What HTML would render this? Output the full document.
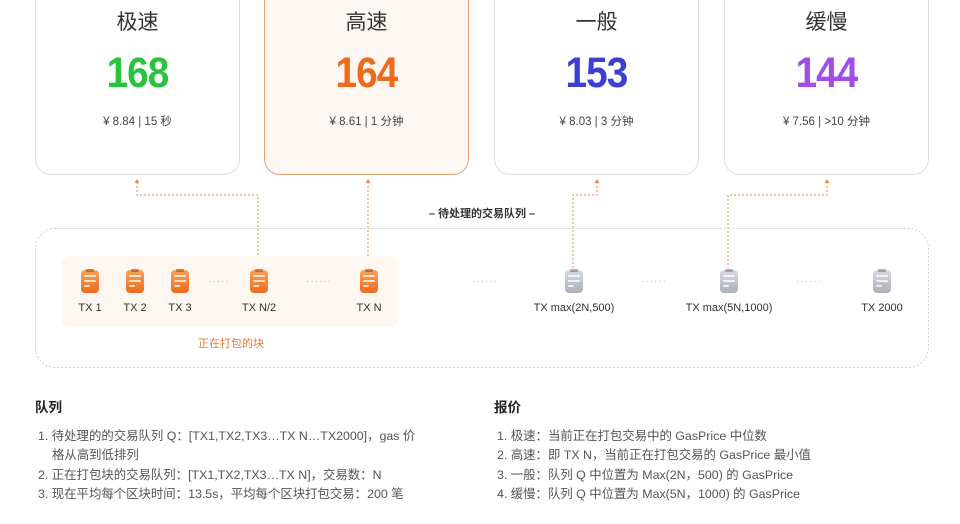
<!DOCTYPE html><html><head><meta charset="utf-8"><style>
*{margin:0;padding:0;box-sizing:border-box}
body{width:960px;height:524px;background:#fff;position:relative;overflow:hidden;font-family:"Liberation Sans","Noto Sans CJK SC",sans-serif;color:#333}
.card{position:absolute;top:-22px;width:205px;height:197px;border:1px solid #ddd;border-radius:16px;background:#fff;text-align:center}
.card.hl{border-color:#eba173;background:#fef8f4}
.t{position:absolute;top:27px;width:100%;font-size:21px;color:#333}
.n{position:absolute;top:70px;width:100%;font-size:43px;font-weight:bold;letter-spacing:-1px;transform:scaleX(.9)}
.p{position:absolute;top:134px;width:100%;font-size:11.5px;color:#444}
.abs{position:absolute}
.ic{position:absolute;width:18px;height:23px;border-radius:4px}
.ic.o{background:linear-gradient(#f9a25a,#ec6c1c)}
.ic.g{background:linear-gradient(#d8dbe0,#aab0b8)}
.ic::before{content:"";position:absolute;left:5px;top:-1px;width:8px;height:3px;border-radius:1px;background:inherit;filter:brightness(.85)}
.ic i{position:absolute;left:3px;height:2px;background:rgba(255,255,255,.75);border-radius:1px}
.lb{position:absolute;font-size:11px;color:#333;text-align:center;width:140px}
.dots{position:absolute;font-size:10px;color:#bbb;letter-spacing:1px}
h4{position:absolute;font-size:13.5px;font-weight:bold;color:#222}
ol{position:absolute;font-size:12.4px;color:#555;line-height:19.3px;list-style:none;white-space:nowrap}
</style></head><body>
<div class="card" style="left:35px"><div class="t">极速</div><div class="n" style="color:#27c53c">168</div><div class="p">¥ 8.84 | 15 秒</div></div>
<div class="card hl" style="left:264px"><div class="t">高速</div><div class="n" style="color:#f06a1a">164</div><div class="p">¥ 8.61 | 1 分钟</div></div>
<div class="card" style="left:494px"><div class="t">一般</div><div class="n" style="color:#3a3fd6">153</div><div class="p">¥ 8.03 | 3 分钟</div></div>
<div class="card" style="left:724px"><div class="t">缓慢</div><div class="n" style="color:#a14ee8">144</div><div class="p">¥ 7.56 | &gt;10 分钟</div></div>

<svg class="abs" style="left:0;top:0" width="960" height="380">
<g fill="none" stroke="#ec8a4d" stroke-width="1" stroke-dasharray="2 2">
<path d="M137 182V195H258V268"/><path d="M368 182V268"/><path d="M597 182V195H573V268"/><path d="M827 182V195H728V268"/>
</g>
<g fill="#ec8a4d"><path d="M134.5 183l2.5-4 2.5 4z"/><path d="M365.5 183l2.5-4 2.5 4z"/><path d="M594.5 183l2.5-4 2.5 4z"/><path d="M824.5 183l2.5-4 2.5 4z"/></g>
<rect x="35.5" y="228.5" width="893" height="139" rx="20" fill="none" stroke="#cfcfcf" stroke-dasharray="2 2"/>
<rect x="62" y="256" width="336" height="71" rx="8" fill="#fef6f0"/>
</svg>
<div class="abs" style="left:0;width:964px;top:205px;text-align:center;font-size:11px;font-weight:bold;color:#333">– 待处理的交易队列 –</div>

<div class="ic o" style="left:81px;top:270px"><i style="top:5px;width:12px"></i><i style="top:10px;width:12px"></i><i style="top:15px;width:6px"></i></div>
<div class="ic o" style="left:126px;top:270px"><i style="top:5px;width:12px"></i><i style="top:10px;width:12px"></i><i style="top:15px;width:6px"></i></div>
<div class="ic o" style="left:171px;top:270px"><i style="top:5px;width:12px"></i><i style="top:10px;width:12px"></i><i style="top:15px;width:6px"></i></div>
<div class="ic o" style="left:250px;top:270px"><i style="top:5px;width:12px"></i><i style="top:10px;width:12px"></i><i style="top:15px;width:6px"></i></div>
<div class="ic o" style="left:360px;top:270px"><i style="top:5px;width:12px"></i><i style="top:10px;width:12px"></i><i style="top:15px;width:6px"></i></div>
<div class="ic g" style="left:565px;top:270px"><i style="top:5px;width:12px"></i><i style="top:10px;width:12px"></i><i style="top:15px;width:6px"></i></div>
<div class="ic g" style="left:720px;top:270px"><i style="top:5px;width:12px"></i><i style="top:10px;width:12px"></i><i style="top:15px;width:6px"></i></div>
<div class="ic g" style="left:873px;top:270px"><i style="top:5px;width:12px"></i><i style="top:10px;width:12px"></i><i style="top:15px;width:6px"></i></div>
<div class="dots" style="left:208px;top:276px">·····</div>
<div class="dots" style="left:306px;top:276px">······</div>
<div class="dots" style="left:472px;top:276px">······</div>
<div class="dots" style="left:641px;top:276px">······</div>
<div class="dots" style="left:796px;top:276px">······</div>
<div class="lb" style="left:20px;top:302px">TX 1</div>
<div class="lb" style="left:65px;top:302px">TX 2</div>
<div class="lb" style="left:110px;top:302px">TX 3</div>
<div class="lb" style="left:189px;top:302px">TX N/2</div>
<div class="lb" style="left:299px;top:302px">TX N</div>
<div class="lb" style="left:504px;top:302px">TX max(2N,500)</div>
<div class="lb" style="left:659px;top:302px">TX max(5N,1000)</div>
<div class="lb" style="left:812px;top:302px">TX 2000</div>
<div class="abs" style="left:198px;top:335px;font-size:11px;color:#ec7a2e">正在打包的块</div>

<h4 style="left:35px;top:396px">队列</h4>
<ol style="left:38px;top:427px;width:400px">
<li>1. 待处理的的交易队列 Q：[TX1,TX2,TX3…TX N…TX2000]，gas 价</li>
<li style="padding-left:14px">格从高到低排列</li>
<li>2. 正在打包块的交易队列：[TX1,TX2,TX3…TX N]，交易数：N</li>
<li>3. 现在平均每个区块时间：13.5s，平均每个区块打包交易：200 笔</li>
</ol>
<h4 style="left:494px;top:396px">报价</h4>
<ol style="left:497px;top:427px;width:400px">
<li>1. 极速：当前正在打包交易中的 GasPrice 中位数</li>
<li>2. 高速：即 TX N，当前正在打包交易的 GasPrice 最小值</li>
<li>3. 一般：队列 Q 中位置为 Max(2N，500) 的 GasPrice</li>
<li>4. 缓慢：队列 Q 中位置为 Max(5N，1000) 的 GasPrice</li>
</ol>
</body></html>
